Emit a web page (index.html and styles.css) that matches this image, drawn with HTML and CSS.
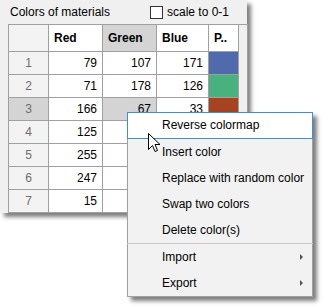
FILE: index.html
```html
<!DOCTYPE html>
<html>
<head>
<meta charset="utf-8">
<link rel="stylesheet" href="styles.css">
</head>
<body>
<div class="panel">
  <div class="head">
    <span class="title">Colors of materials</span>
    <label class="check"><span class="box"></span>scale to 0-1</label>
  </div>
  <div class="grid">
    <table>
      <colgroup><col class="c0"><col class="c1"><col class="c2"><col class="c3"><col class="c4"></colgroup>
      <thead>
        <tr><th class="corner"></th><th>Red</th><th class="sel">Green</th><th>Blue</th><th>P..</th></tr>
      </thead>
      <tbody>
        <tr><td class="rh">1</td><td>79</td><td>107</td><td>171</td><td class="sw" style="background:rgb(79,107,171)"></td></tr>
        <tr><td class="rh">2</td><td>71</td><td>178</td><td>126</td><td class="sw" style="background:rgb(71,178,126)"></td></tr>
        <tr><td class="rh sel">3</td><td>166</td><td class="sel">67</td><td>33</td><td class="sw" style="background:rgb(166,67,33)"></td></tr>
        <tr><td class="rh">4</td><td>125</td><td></td><td></td><td class="sw"></td></tr>
        <tr><td class="rh">5</td><td>255</td><td></td><td></td><td class="sw"></td></tr>
        <tr><td class="rh">6</td><td>247</td><td></td><td></td><td class="sw"></td></tr>
        <tr><td class="rh">7</td><td>15</td><td></td><td></td><td class="sw"></td></tr>
      </tbody>
    </table>
  </div>
</div>

<div class="menu">
  <div class="item hover">Reverse colormap</div>
  <div class="item">Insert color</div>
  <div class="item">Replace with random color</div>
  <div class="item">Swap two colors</div>
  <div class="item">Delete color(s)</div>
  <div class="sep"></div>
  <div class="item sub">Import<span class="arrow"></span></div>
  <div class="item sub">Export<span class="arrow"></span></div>
</div>

<svg class="cursor" width="13" height="20" viewBox="0 0 13 20">
  <path d="M0.5 0.5 L0.5 16.5 L4.5 12.5 L7 18.5 L9.5 17.5 L7 11.5 L12 11.5 Z" fill="#fff" stroke="#000" stroke-width="1" stroke-linejoin="miter"/>
</svg>
</body>
</html>
```

FILE: styles.css
```css
html, body {
  margin: 0;
  padding: 0;
  background: #fff;
}
body {
  width: 325px;
  height: 307px;
  position: relative;
  overflow: hidden;
  font-family: "Liberation Sans", Arial, sans-serif;
  font-size: 12px;
  color: #000;
}
.panel {
  width: 247px;
  height: 213px;
  background: #f0f0f0;
  box-shadow: 4px 4px 4px rgba(0, 0, 0, 0.5);
}
.head {
  height: 24px;
  display: flex;
  align-items: center;
}
.title {
  padding-left: 10px;
  width: 140px;
}
.check {
  display: flex;
  align-items: center;
  gap: 4px;
}
.box {
  width: 11px;
  height: 11px;
  border: 1px solid #333;
  background: #fff;
}
.grid {
  margin-left: 8px;
  width: 238px;
  height: 188px;
  border: 1px solid #a0a0a0;
  border-bottom: none;
  background: #f0f0f0;
  overflow: hidden;
}
table {
  border-collapse: separate;
  border-spacing: 0;
  table-layout: fixed;
  width: 230px;
}
col.c0 { width: 40px; }
col.c1 { width: 54px; }
col.c2 { width: 54px; }
col.c3 { width: 52px; }
col.c4 { width: 30px; }
th, td {
  border-right: 1px solid #a0a0a0;
  border-bottom: 1px solid #a0a0a0;
  padding: 0;
  box-sizing: border-box;
}
th {
  height: 27px;
  background: #fff;
  font-weight: bold;
  text-align: left;
  padding-left: 5px;
  white-space: nowrap;
  overflow: hidden;
}
th.corner { background: #f3f3f3; }
th.sel { background: #d4d4d4; }
td {
  height: 23px;
  background: #fff;
  text-align: right;
  padding-right: 5px;
}
td.rh {
  background: #f3f3f3;
  color: #6d6d6d;
  text-align: center;
  padding-right: 0;
}
td.sel { background: #d4d4d4; }
td.rh.sel { background: #d4d4d4; }
.menu {
  position: absolute;
  left: 127px;
  top: 112px;
  width: 186px;
  background: #f2f2f2;
  border: 1px solid #a0a0a0;
  box-sizing: border-box;
  box-shadow: 4px 4px 4px rgba(0, 0, 0, 0.5);
}
.item {
  height: 26px;
  line-height: 26px;
  padding-left: 34px;
  position: relative;
  white-space: nowrap;
}
.item.hover {
  margin: -1px -1px 0 -1px;
  height: 25px;
  line-height: 25px;
  background: #fff;
  border: 1px solid #3c8fdd;
  padding-left: 34px;
}
.sep {
  height: 1px;
  background: #c8c8c8;
  margin: 0 -1px;
}
.arrow {
  position: absolute;
  right: 9px;
  top: 10px;
  width: 0;
  height: 0;
  border-left: 3px solid #555;
  border-top: 3px solid transparent;
  border-bottom: 3px solid transparent;
}
.cursor {
  position: absolute;
  left: 148px;
  top: 133px;
}
```
